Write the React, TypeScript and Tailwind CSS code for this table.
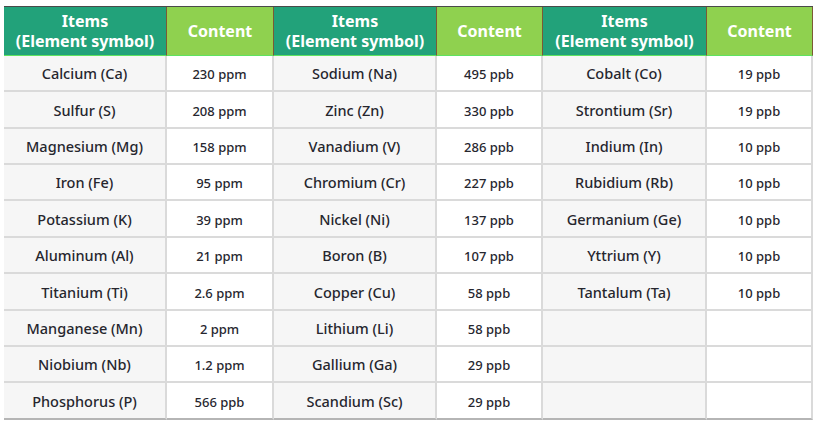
import React from 'react';

const groups: [string, string][][] = [
  [
    ['Calcium (Ca)', '230 ppm'],
    ['Sulfur (S)', '208 ppm'],
    ['Magnesium (Mg)', '158 ppm'],
    ['Iron (Fe)', '95 ppm'],
    ['Potassium (K)', '39 ppm'],
    ['Aluminum (Al)', '21 ppm'],
    ['Titanium (Ti)', '2.6 ppm'],
    ['Manganese (Mn)', '2 ppm'],
    ['Niobium (Nb)', '1.2 ppm'],
    ['Phosphorus (P)', '566 ppb'],
  ],
  [
    ['Sodium (Na)', '495 ppb'],
    ['Zinc (Zn)', '330 ppb'],
    ['Vanadium (V)', '286 ppb'],
    ['Chromium (Cr)', '227 ppb'],
    ['Nickel (Ni)', '137 ppb'],
    ['Boron (B)', '107 ppb'],
    ['Copper (Cu)', '58 ppb'],
    ['Lithium (Li)', '58 ppb'],
    ['Gallium (Ga)', '29 ppb'],
    ['Scandium (Sc)', '29 ppb'],
  ],
  [
    ['Cobalt (Co)', '19 ppb'],
    ['Strontium (Sr)', '19 ppb'],
    ['Indium (In)', '10 ppb'],
    ['Rubidium (Rb)', '10 ppb'],
    ['Germanium (Ge)', '10 ppb'],
    ['Yttrium (Y)', '10 ppb'],
    ['Tantalum (Ta)', '10 ppb'],
    ['', ''],
    ['', ''],
    ['', ''],
  ],
];

// row heights so the lines land where the picture has them
const rowH = ['h-[36px]', 'h-[37px]', 'h-[36px]', 'h-[36px]', 'h-[37px]', 'h-[36px]', 'h-[37px]', 'h-[36px]', 'h-[36px]', 'h-[37px]'];

const font = { fontFamily: '"Noto Sans", "Open Sans", sans-serif' };

function Header() {
  return (
    <>
      {[0, 1, 2].map((g) => (
        <React.Fragment key={g}>
          <div className="h-[49px] flex flex-col items-center justify-center bg-[#22a27a] text-white font-bold text-[16px] leading-[20px] border-b border-[#5fe35f] border-r border-r-[#7b5a35]">
            <span>Items</span>
            <span>(Element symbol)</span>
          </div>
          <div className="h-[49px] flex items-center justify-center bg-[#8fd14f] text-white font-bold text-[16px] border-b border-[#5fe35f] border-r border-r-[#7b5a35]">
            Content
          </div>
        </React.Fragment>
      ))}
    </>
  );
}

export default function App() {
  const rows = Array.from({ length: 10 }, (_, i) => i);
  return (
    <div className="w-[820px] h-[422px] bg-white pl-[4px] pt-[6px]" style={font}>
      <div className="w-[809px] border-t border-[#4a4a4a] grid grid-cols-[163px_107px_163px_106px_164px_106px]">
        <Header />
        {rows.map((r) =>
          groups.map((g, gi) => (
            <React.Fragment key={`${r}-${gi}`}>
              <div className={`${rowH[r]} flex items-center justify-center bg-[#f6f6f6] text-[#26262e] font-medium text-[14.5px] leading-[20px] border-r-2 border-[#dadada] ${r < 9 ? 'border-b-2' : 'border-b-2 border-b-[#b5b5b5]'}`}>
                {g[r][0]}
              </div>
              <div className={`${rowH[r]} flex items-center justify-center pt-[2px] bg-white text-[#26262e] font-medium text-[13px] leading-[20px] border-r-2 border-[#dadada] ${r < 9 ? 'border-b-2' : 'border-b-2 border-b-[#b5b5b5]'}`}>
                {g[r][1]}
              </div>
            </React.Fragment>
          ))
        )}
      </div>
    </div>
  );
}
